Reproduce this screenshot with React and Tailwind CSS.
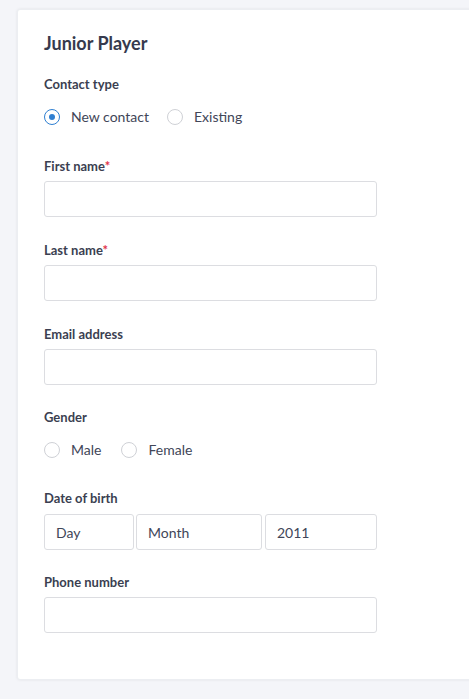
import React from "react";

function Label({ children, required }) {
  return (
    <div className="text-[13px] leading-[18px] font-bold text-[#3b3f51]">
      {children}
      {required && <span className="text-[#e0344b]">*</span>}
    </div>
  );
}

function Radio({ checked, label }) {
  return (
    <div className="flex items-center">
      <span
        className={
          "w-4 h-4 rounded-full border flex items-center justify-center bg-white " +
          (checked ? "border-[#2f7fd1]" : "border-[#cfd1d6]")
        }
      >
        {checked && <span className="w-[6px] h-[6px] rounded-full bg-[#2f7fd1]" />}
      </span>
      <span className="ml-[11px] text-[14px] leading-[18px] text-[#414658]">{label}</span>
    </div>
  );
}

function Input({ className = "", value }) {
  return (
    <div
      className={
        "h-9 border border-[#dcdde1] rounded-[3px] bg-white flex items-center px-[11px] text-[14px] text-[#414658] " +
        className
      }
    >
      {value}
    </div>
  );
}

export default function App() {
  return (
    <div
      className="w-full min-h-screen bg-[#f4f5f9] overflow-hidden pl-[17px] pt-[9px] pb-[20px]"
      style={{ fontFamily: "Lato, 'Noto Sans', sans-serif" }}
    >
      <div className="w-[480px] bg-white rounded-[3px] shadow-[0_0_3px_rgba(0,0,0,0.08)] border border-[#eceef2] pl-[26px] pt-[21px] pb-[46px]">
        <div className="text-[18px] leading-6 font-bold text-[#363a4d]">Junior Player</div>

        <div className="mt-5">
          <Label>Contact type</Label>
          <div className="mt-[15px] flex gap-[18px]">
            <Radio checked label="New contact" />
            <Radio label="Existing" />
          </div>
        </div>

        <div className="mt-[31px]">
          <Label required>First name</Label>
          <Input className="mt-[6px] w-[333px]" />
        </div>

        <div className="mt-[24px]">
          <Label required>Last name</Label>
          <Input className="mt-[6px] w-[333px]" />
        </div>

        <div className="mt-[24px]">
          <Label>Email address</Label>
          <Input className="mt-[6px] w-[333px]" />
        </div>

        <div className="mt-[23px]">
          <Label>Gender</Label>
          <div className="mt-[15px] flex gap-[20px]">
            <Radio label="Male" />
            <Radio label="Female" />
          </div>
        </div>

        <div className="mt-[30px]">
          <Label>Date of birth</Label>
          <div className="mt-[7px] flex">
            <Input className="w-[90px]" value="Day" />
            <Input className="w-[126px] ml-[2px]" value="Month" />
            <Input className="w-[112px] ml-[3px]" value="2011" />
          </div>
        </div>

        <div className="mt-[23px]">
          <Label>Phone number</Label>
          <Input className="mt-[6px] w-[333px]" />
        </div>
      </div>
    </div>
  );
}
